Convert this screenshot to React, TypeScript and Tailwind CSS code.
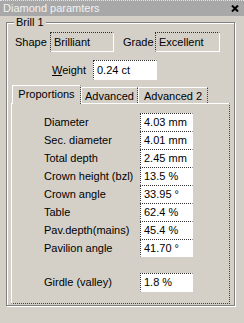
import React from "react";

const rows: [string, string][] = [
  ["Diameter", "4.03 mm"],
  ["Sec. diameter", "4.01 mm"],
  ["Total depth", "2.45 mm"],
  ["Crown height (bzl)", "13.5 %"],
  ["Crown angle", "33.95 °"],
  ["Table", "62.4 %"],
  ["Pav.depth(mains)", "45.4 %"],
  ["Pavilion angle", "41.70 °"],
];

const sunken =
  "border border-dotted border-t-[#303030] border-l-[#303030] border-b-white border-r-white [border-bottom-style:solid] [border-right-style:solid]";

const App = () => {
  return (
    <div className="w-[244px] h-[323px] bg-[#d4d0c8] text-black text-[11px] leading-[13px] font-['Liberation_Sans',Arial,sans-serif] overflow-hidden">
      <div className="h-[16px] bg-[#a8a8a8] border-t border-dotted border-[#e4e4e4] text-[#f2f2f2] flex items-center justify-between pl-[3px] pr-[5px]">
        <span>Diamond paramters</span>
        <svg width="8" height="7" viewBox="0 0 8 7">
          <path d="M1 0.5 L7 6.5 M7 0.5 L1 6.5" stroke="#000" strokeWidth="2" />
        </svg>
      </div>

      <div className="relative ml-[6px] mt-[6px] w-[229px] h-[284px] border border-[#808080] shadow-[inset_1px_1px_0_#fff,1px_1px_0_#fff] pt-[9px]">
        <span className="absolute top-[-7px] left-[7px] px-[2px] bg-[#d4d0c8]">Brill 1</span>

        <div className="flex items-center h-[20px] pl-[8px]">
          <span className="w-[35px]">Shape</span>
          <div className={`w-[64px] h-[20px] flex items-center pl-[3px] bg-[#d4d0c8] ${sunken}`}>Brilliant</div>
          <span className="ml-[9px] w-[32px]">Grade</span>
          <div className={`w-[65px] h-[20px] flex items-center pl-[3px] bg-[#d4d0c8] ${sunken}`}>Excellent</div>
        </div>

        <div className="flex items-center h-[20px] mt-[8px] pl-[45px]">
          <span className="w-[41px]">
            <span className="underline">W</span>eight
          </span>
          <div className={`w-[64px] h-[20px] flex items-center pl-[3px] bg-white ${sunken}`}>0.24 ct</div>
        </div>

        <div className="mt-[5px] ml-[4px]">
          <div className="flex items-end h-[18px] pl-[1px]">
            <div className="relative z-10 w-[69px] h-[19px] -mb-[1px] bg-[#d4d0c8] border-l border-t border-white border-r border-r-[#404040] [border-right-style:dotted] flex items-center justify-center pb-[1px]">
              Proportions
            </div>
            <div className="w-[57px] h-[16px] border-l border-t border-white border-r border-r-[#404040] [border-right-style:dotted] flex items-center justify-center pt-[1px]">
              Advanced
            </div>
            <div className="w-[70px] h-[16px] border-l border-t border-white border-r border-r-[#404040] [border-right-style:dotted] flex items-center justify-center pt-[1px]">
              Advanced 2
            </div>
          </div>
          <div className="w-[219px] h-[201px] border border-dotted border-t-white border-l-white border-r-[#404040] border-b-[#404040] [border-top-style:solid] [border-left-style:solid] pt-[9px] pl-[32px]">
            {rows.map(([label, value], i) => (
              <div key={i} className="flex items-center h-[18px]">
                <span className="w-[96px]">{label}</span>
                <div className={`w-[53px] h-[18px] flex items-center pl-[3px] bg-white ${sunken}`}>{value}</div>
              </div>
            ))}
            <div className="flex items-center h-[19px] mt-[16px]">
              <span className="w-[96px]">Girdle (valley)</span>
              <div className={`w-[53px] h-[19px] flex items-center pl-[3px] bg-white ${sunken}`}>1.8 %</div>
            </div>
          </div>
        </div>
      </div>
    </div>
  );
};

export default App;
